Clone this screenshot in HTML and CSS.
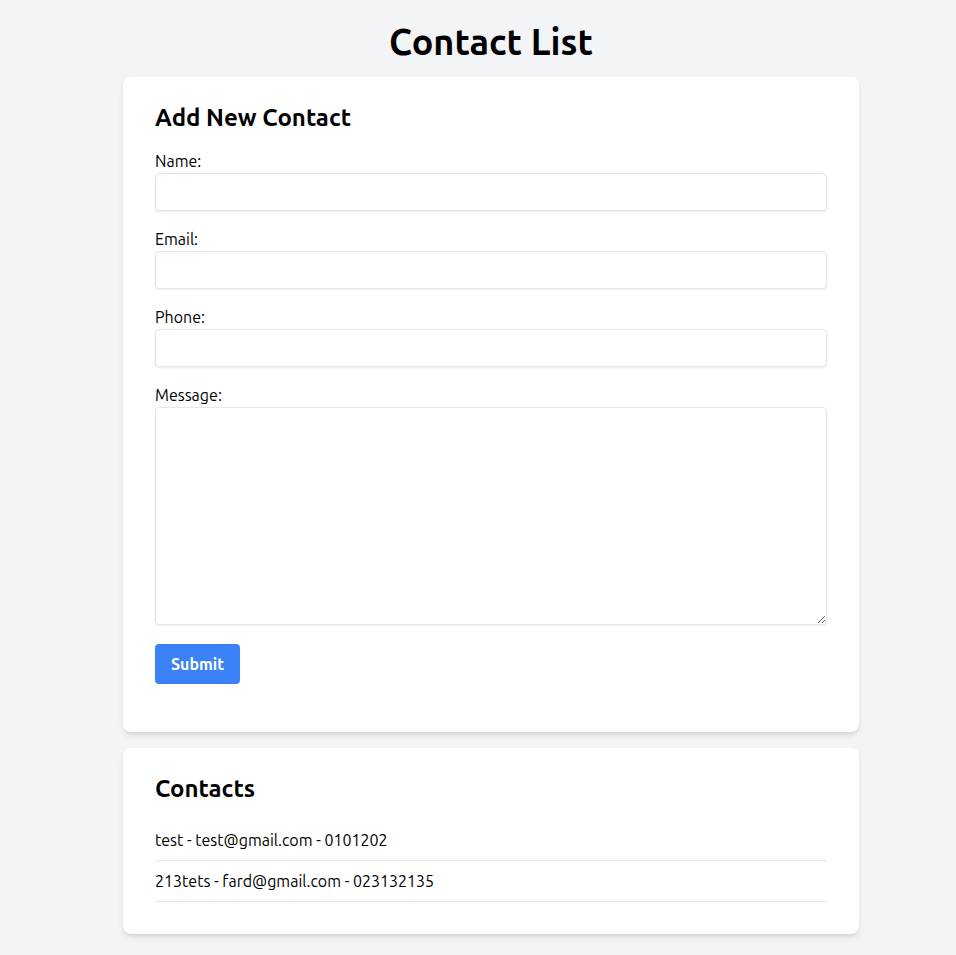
FILE: index.html
```html
<!DOCTYPE html>
<html lang="en">
<head>
<meta charset="utf-8">
<title>Contact List</title>
<link rel="stylesheet" href="styles.css">
</head>
<body>
<main class="page">
  <h1 class="title">Contact List</h1>
  <section class="card form-card">
    <h2 class="card-title">Add New Contact</h2>
    <form class="form">
      <div class="field">
        <label class="label" for="name">Name:</label>
        <input class="input" id="name" type="text">
      </div>
      <div class="field">
        <label class="label" for="email">Email:</label>
        <input class="input" id="email" type="email">
      </div>
      <div class="field">
        <label class="label" for="phone">Phone:</label>
        <input class="input" id="phone" type="text">
      </div>
      <div class="field">
        <label class="label" for="message">Message:</label>
        <textarea class="input textarea" id="message"></textarea>
      </div>
      <button class="btn" type="button">Submit</button>
    </form>
  </section>
  <section class="card list-card">
    <h2 class="card-title">Contacts</h2>
    <ul class="list">
      <li class="item">test - test@gmail.com - 0101202</li>
      <li class="item">213tets - fard@gmail.com - 023132135</li>
    </ul>
  </section>
</main>
</body>
</html>
```
FILE: styles.css
```css
* { box-sizing: border-box; }
html, body { margin: 0; }
body {
  background: #f3f4f6;
  font-family: "Ubuntu", "Noto Sans", "Open Sans", sans-serif;
  color: #000;
  padding: 22px 0 20px 26px;
  font-size: 16px;
  line-height: 24px;
}
.page {
  width: 736px;
  margin: 0 auto;
}
.title {
  margin: 0 0 15px;
  font-size: 36px;
  line-height: 40px;
  font-weight: 700;
  text-align: center;
}
.card {
  background: #fff;
  border-radius: 8px;
  box-shadow: 0 4px 6px -1px rgba(0,0,0,0.1), 0 2px 4px -2px rgba(0,0,0,0.1);
  padding: 25px 32px 32px;
}
.form-card { margin-bottom: 16px; }
.card-title {
  margin: 0 0 15px;
  font-size: 24px;
  line-height: 32px;
  font-weight: 700;
}
.form { margin: 0 0 16px; }
.field { margin-bottom: 16px; }
.label { display: block; }
.input {
  display: block;
  width: 100%;
  height: 38px;
  border: 1px solid #e5e7eb;
  border-radius: 4px;
  box-shadow: 0 1px 2px 0 rgba(0,0,0,0.08);
  font: inherit;
  padding: 6px 12px;
  margin: 0;
  background: #fff;
}
.textarea {
  height: 218px;
  resize: vertical;
}
.btn {
  display: block;
  margin-top: 19px;
  background: #3b82f6;
  color: #fff;
  border: 0;
  border-radius: 4px;
  padding: 8px 16px;
  font: inherit;
  font-weight: 700;
  line-height: 24px;
}
.field:last-of-type { margin-bottom: 0; }
.list { list-style: none; margin: 0; padding: 0; }
.item {
  padding: 8px 0;
  border-bottom: 1px solid #e5e7eb;
}
```
